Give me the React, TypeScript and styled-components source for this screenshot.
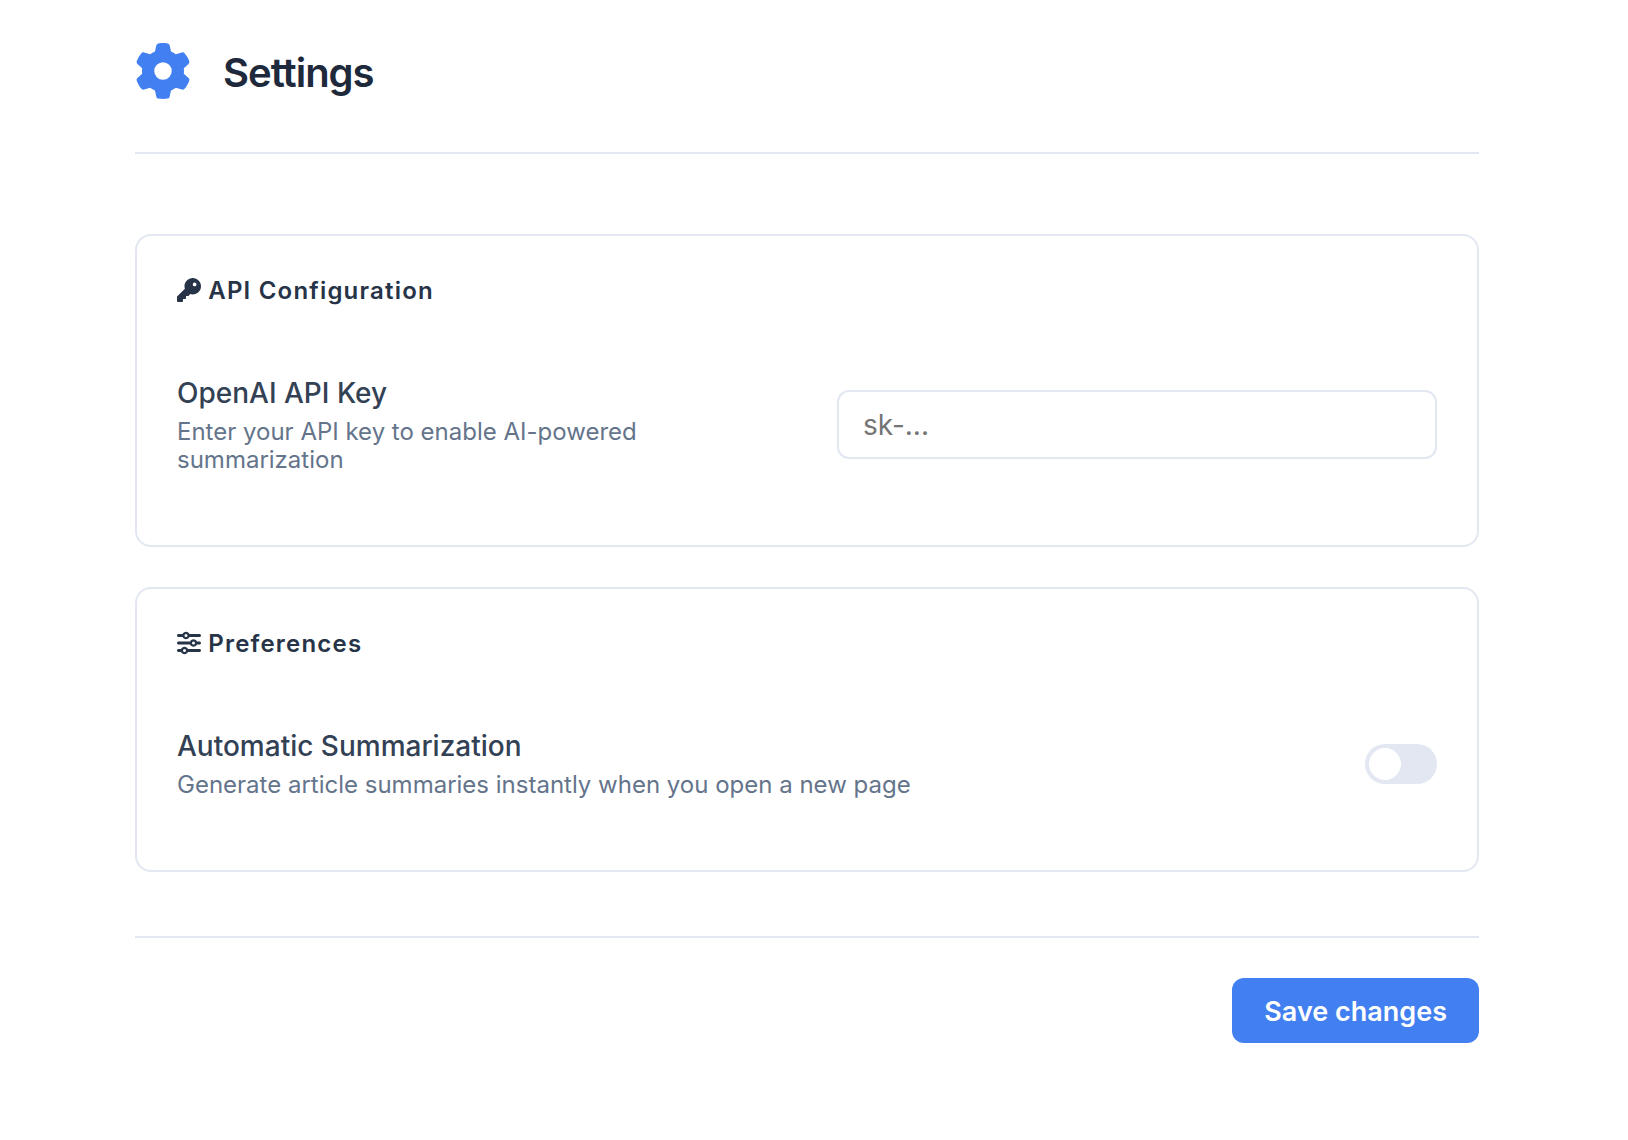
import React, { useState } from "react";
import styled, { createGlobalStyle } from "styled-components";
import { FaGear, FaKey, FaSliders } from "react-icons/fa6";

const color = {
  accent: "#427ff1",
  border: "#e2e7f1",
  title: "#1e293b",
  heading: "#273347",
  label: "#334155",
  muted: "#64748b",
};

const GlobalStyle = createGlobalStyle`
  *, *::before, *::after { box-sizing: border-box; }
  body {
    margin: 0;
    background: #fff;
    font-family: Inter, "Liberation Sans", sans-serif;
    -webkit-font-smoothing: antialiased;
  }
  button, input { font-family: inherit; }
`;

const Page = styled.div`
  padding: 43px 14px 43px 0;
`;

const Container = styled.main`
  width: 100%;
  max-width: 1344px;
  margin: 0 auto;
`;

const Header = styled.header`
  display: flex;
  align-items: center;
  gap: 32px;
  padding-bottom: 53px;
  margin-bottom: 80px;
  border-bottom: 2px solid ${color.border};
`;

const Logo = styled(FaGear)`
  flex: none;
  width: 56px;
  height: 56px;
  color: ${color.accent};
`;

const Title = styled.h1`
  margin: 0;
  padding-top: 4px;
  font-size: 40px;
  line-height: 48px;
  font-weight: 600;
  letter-spacing: -1px;
  color: ${color.title};
`;

const Cards = styled.div`
  display: flex;
  flex-direction: column;
  gap: 40px;
`;

const Card = styled.section`
  padding: 40px;
  border: 2px solid ${color.border};
  border-radius: 16px;
`;

const CardHeading = styled.h2`
  margin: 0 0 38px;
  font-size: 24px;
  line-height: 30px;
  font-weight: 600;
  letter-spacing: 0.05em;
  color: ${color.heading};

  svg {
    vertical-align: -3px;
  }
`;

const Row = styled.div`
  display: flex;
  align-items: center;
  justify-content: space-between;
  gap: 64px;
  padding: 31px 0;
`;

const Info = styled.div`
  display: flex;
  flex-direction: column;
  gap: 8px;
  min-width: 0;
  padding-top: 2px;
`;

const Label = styled.label`
  font-size: 28px;
  line-height: 33px;
  font-weight: 500;
  color: ${color.label};
`;

const Description = styled.p`
  margin: 0;
  font-size: 24px;
  line-height: 28px;
  color: ${color.muted};
`;

const TextInput = styled.input`
  flex: none;
  width: 600px;
  padding: 16px 24px;
  border: 2px solid ${color.border};
  border-radius: 12px;
  background: #fff;
  font-size: 28px;
  line-height: 33px;
  height: 69px;
  color: ${color.title};
  &::placeholder { color: #757575; opacity: 1; }
`;

const Toggle = styled.input`
  appearance: none;
  flex: none;
  display: flex;
  width: 72px;
  height: 40px;
  margin: 0;
  padding: 4px;
  border-radius: 20px;
  background: ${color.border};
  cursor: pointer;
  &::before {
    content: "";
    width: 32px;
    height: 32px;
    border-radius: 50%;
    background: #fff;
  }
  &:checked { background: ${color.accent}; justify-content: flex-end; }
`;

const Footer = styled.footer`
  display: flex;
  justify-content: flex-end;
  margin-top: 64px;
  padding-top: 40px;
  border-top: 2px solid ${color.border};
`;

const SaveButton = styled.button`
  padding: 17px 32px 15px;
  border: 0;
  border-radius: 12px;
  background: ${color.accent};
  color: #fff;
  font-size: 27px;
  line-height: 33px;
  font-weight: 600;
  cursor: pointer;
`;

export default function App() {
  const [apiKey, setApiKey] = useState("");
  const [auto, setAuto] = useState(false);

  return (
    <>
      <GlobalStyle />
      <Page>
        <Container>
          <Header>
            <Logo aria-hidden />
            <Title>Settings</Title>
          </Header>
          <Cards>
            <Card>
              <CardHeading>
                <FaKey aria-hidden /> API Configuration
              </CardHeading>
              <Row>
                <Info>
                  <Label htmlFor="api-key">OpenAI API Key</Label>
                  <Description>Enter your API key to enable AI-powered summarization</Description>
                </Info>
                <TextInput
                  id="api-key"
                  type="text"
                  placeholder="sk-..."
                  value={apiKey}
                  onChange={(e) => setApiKey(e.target.value)}
                />
              </Row>
            </Card>
            <Card>
              <CardHeading>
                <FaSliders aria-hidden /> Preferences
              </CardHeading>
              <Row>
                <Info>
                  <Label htmlFor="auto-summary">Automatic Summarization</Label>
                  <Description>Generate article summaries instantly when you open a new page</Description>
                </Info>
                <Toggle
                  id="auto-summary"
                  type="checkbox"
                  checked={auto}
                  onChange={(e) => setAuto(e.target.checked)}
                />
              </Row>
            </Card>
          </Cards>
          <Footer>
            <SaveButton type="button">Save changes</SaveButton>
          </Footer>
        </Container>
      </Page>
    </>
  );
}
